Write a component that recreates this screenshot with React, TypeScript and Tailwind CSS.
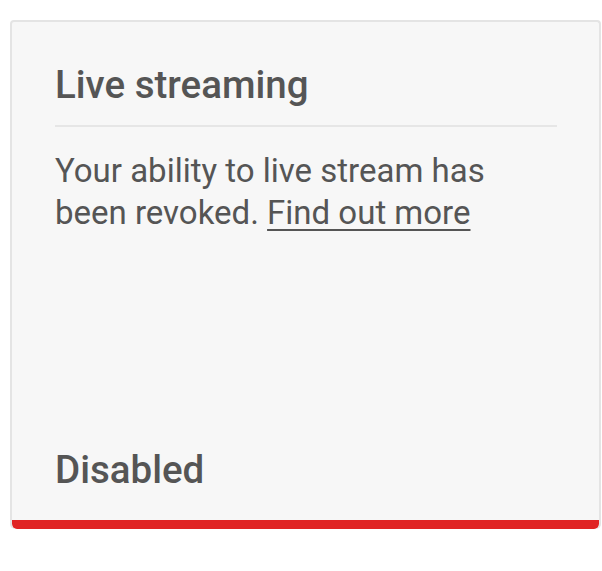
import React from 'react';

const App: React.FC = () => {
  return (
    <div className="w-[602px] h-[571px] bg-white pt-[20px] pl-[10px] font-['Roboto',sans-serif]">
      <div className="w-[591px] h-[509px] flex flex-col rounded-t-[4px] rounded-b-[5px] border-2 border-b-0 border-[#e4e4e4] bg-[#f7f7f7] overflow-hidden">
        <div className="flex-1 flex flex-col pl-[43px] pr-[42px]">
          {/* Heading */}
          <h2 className="pt-[41px] text-[38.5px] leading-[44px] font-medium text-[#555555]">Live streaming</h2>
          <div className="mt-[18px] h-[2px] bg-[#e6e6e6]" />

          {/* Message */}
          <p className="mt-[23px] max-w-[445px] text-[33px] leading-[42px] text-[#555555]">
            Your ability to live stream has been revoked.{' '}
            <a href="#" className="underline underline-offset-[5px] decoration-2">Find out more</a>
          </p>

          <div className="flex-1" />

          {/* Status */}
          <p className="pb-[28px] text-[38.5px] leading-[44px] font-medium text-[#555555]">Disabled</p>
        </div>
        <div className="h-[9px] bg-[#e02424] rounded-b-[5px]" />
      </div>
    </div>
  );
};

export default App;
